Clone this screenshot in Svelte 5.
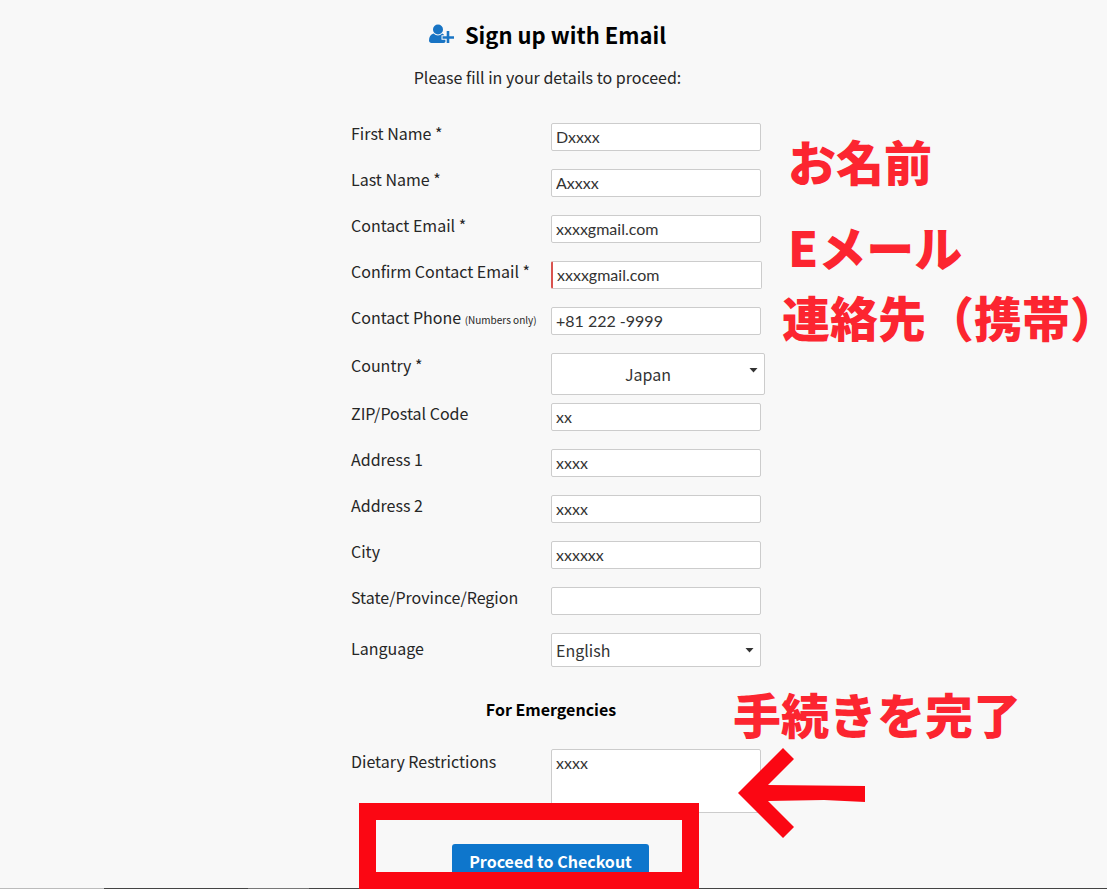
<script lang="ts">
  interface Field {
    id: string;
    label: string;
    value: string;
    type: string;
    hint?: string;
    invalid?: boolean;
  }

  let contactFields: Field[] = [
    { id: 'first-name', label: 'First Name *', value: 'Dxxxx', type: 'text' },
    { id: 'last-name', label: 'Last Name *', value: 'Axxxx', type: 'text' },
    { id: 'email', label: 'Contact Email *', value: 'xxxxgmail.com', type: 'text' },
    { id: 'confirm-email', label: 'Confirm Contact Email *', value: 'xxxxgmail.com', type: 'text', invalid: true },
    { id: 'phone', label: 'Contact Phone', value: '+81 222 -9999', type: 'tel', hint: '(Numbers only)' },
  ];

  let addressFields: Field[] = [
    { id: 'zip', label: 'ZIP/Postal Code', value: 'xx', type: 'text' },
    { id: 'address-1', label: 'Address 1', value: 'xxxx', type: 'text' },
    { id: 'address-2', label: 'Address 2', value: 'xxxx', type: 'text' },
    { id: 'city', label: 'City', value: 'xxxxxx', type: 'text' },
    { id: 'state', label: 'State/Province/Region', value: '', type: 'text' },
  ];

  let country = 'Japan';
  let language = 'English';
  let dietary = 'xxxx';

  const handleSubmit = (event: any) => {
    event.preventDefault();
  };
</script>

<style>
  :global(body) {
    background-color: #f8f8f8;
  }
  .page {
    display: flex;
    flex-direction: column;
    height: 100vh;
    overflow: hidden;
    color: #262626;
    font-family: "Noto Sans CJK JP", sans-serif;
    font-size: 16px;
  }
  .content {
    flex: 1;
    min-height: 0;
  }
  header {
    padding: 18px 12px 0 0;
    text-align: center;
  }
  h1 {
    display: flex;
    justify-content: center;
    align-items: center;
    gap: 11px;
    margin: 0;
    color: #000;
    font-size: 22px;
    font-weight: 700;
    line-height: 32px;
  }
  header p {
    margin: 15px 0 0;
    line-height: 24px;
  }
  .signup {
    padding: 34px 0 0 9px;
  }
  form {
    position: relative;
    width: 414px;
    margin: 0 auto;
  }
  .row {
    display: grid;
    grid-template-columns: 200px 1fr;
    align-items: start;
    margin-bottom: 18px;
  }
  .row.country {
    margin-bottom: 8px;
  }
  label {
    line-height: 20px;
    white-space: nowrap;
  }
  .country label,
  .dietary label {
    line-height: 24px;
  }
  .language label {
    line-height: 30px;
  }
  small {
    font-size: 10px;
  }
  input,
  select,
  textarea {
    display: block;
    box-sizing: border-box;
    width: 210px;
    margin: 0;
    border: 1px solid #ccc;
    border-radius: 2px;
    background-color: #fff;
    color: #333;
    outline: none;
  }
  input,
  textarea {
    padding: 0 4px 1px;
    font-family: Lato, sans-serif;
    font-size: 16px;
  }
  input {
    height: 28px;
  }
  input.invalid {
    width: 211px;
    border-left: 2px solid #d9534f;
  }
  textarea {
    height: 64px;
    padding-top: 3px;
    line-height: 20px;
    resize: none;
  }
  .select {
    position: relative;
    width: 210px;
  }
  select {
    width: 100%;
    height: 34px;
    padding: 0 24px 0 4px;
    appearance: none;
    font-family: inherit;
    font-size: 16px;
  }
  .select svg {
    position: absolute;
    top: 15px;
    right: 7px;
    pointer-events: none;
  }
  .country .select {
    width: 214px;
  }
  .country select {
    height: 42px;
    text-align: center;
    text-align-last: center;
  }
  h2 {
    margin: 30px 14px 28px 0;
    color: #000;
    font-size: 16px;
    font-weight: 700;
    line-height: 24px;
    text-align: center;
  }
  .actions {
    display: flex;
    justify-content: center;
    margin: 31px 15px 0 0;
  }
  .actions button {
    height: 34px;
    padding: 0 17px;
    border: 0;
    border-radius: 3px;
    background-color: #0e76cc;
    color: #fff;
    font-family: inherit;
    font-size: 16px;
    font-weight: 700;
    white-space: nowrap;
    cursor: pointer;
  }
  /* hand-placed notes on top of the form */
  .note {
    position: absolute;
    color: #fc2530;
    font-size: 48px;
    font-weight: 900;
    line-height: 48px;
    white-space: nowrap;
  }
  .note.name {
    top: 13px;
    left: 437px;
  }
  .note.email {
    top: 99px;
    left: 437px;
  }
  .note.phone {
    top: 169px;
    left: 431px;
  }
  .note.finish {
    top: 566px;
    left: 382px;
  }
  /* half-width closing bracket */
  .close {
    font-feature-settings: "halt";
  }
  .arrow {
    position: absolute;
    top: 624px;
    left: 387px;
  }
  .frame {
    position: absolute;
    top: 680px;
    left: 8px;
    box-sizing: border-box;
    width: 340px;
    height: 86px;
    border: 17px solid #fb0713;
    pointer-events: none;
  }
  footer {
    flex: none;
    height: 1px;
    background: linear-gradient(to right, #bbb 104px, #444 104px, #444 248px, #777 248px, #777 309px, #444 309px);
  }
</style>

{#snippet caret()}
  <svg width="9" height="5" viewBox="0 0 9 5" aria-hidden="true">
    <path d="M0.500 0h8L4.500 4.500z" fill="#333" />
  </svg>
{/snippet}

{#snippet textRow(field: Field)}
  <div class="row">
    <label for={field.id}>{field.label} {#if field.hint}<small>{field.hint}</small>{/if}</label>
    <input id={field.id} type={field.type} class={field.invalid ? 'invalid' : ''} bind:value={field.value} />
  </div>
{/snippet}

<div class="page">
  <main class="content">
    <header>
      <h1>
        <svg width="25" height="20" viewBox="0 0 25 20" fill="#1874c4" aria-hidden="true">
          <circle cx="9" cy="5.500" r="5" />
          <path d="M4.500 9.500C1.500 10.500 0 13 0 16.500 0 18 1 19 2.500 19H14.500C15.300 19 16 18.600 16.400 18V15.800H12.500V11.200H15.300C14.800 10.600 14.200 9.900 13.200 9.500 10.500 12 7.500 12 4.500 9.500Z" />
          <path d="M17.700 7h2.600v5.200H25v2.600h-4.700V19h-2.600v-4.200h-4.200v-2.600h4.200z" />
        </svg>
        Sign up with Email
      </h1>
      <p>Please fill in your details to proceed:</p>
    </header>

    <div class="signup">
      <form onsubmit={handleSubmit}>
        {#each contactFields as field}
          {@render textRow(field)}
        {/each}

        <div class="row country">
          <label for="country">Country *</label>
          <div class="select">
            <select id="country" bind:value={country}>
              <option>Japan</option>
            </select>
            {@render caret()}
          </div>
        </div>

        {#each addressFields as field}
          {@render textRow(field)}
        {/each}

        <div class="row language">
          <label for="language">Language</label>
          <div class="select">
            <select id="language" bind:value={language}>
              <option>English</option>
            </select>
            {@render caret()}
          </div>
        </div>

        <h2>For Emergencies</h2>

        <div class="row dietary">
          <label for="dietary">Dietary Restrictions</label>
          <textarea id="dietary" bind:value={dietary}></textarea>
        </div>

        <div class="actions">
          <button type="submit">Proceed to Checkout</button>
        </div>

        <span class="note name" lang="ja">お名前</span>
        <span class="note email" lang="ja">Eメール</span>
        <span class="note phone" lang="ja">連絡先（携帯<span class="close">）</span></span>
        <span class="note finish" lang="ja">手続きを完了</span>
        <svg class="arrow" width="128" height="92" viewBox="0 0 128 92" aria-hidden="true">
          <path d="M0 46L45 1L56 12L30 38L127 39V55L86 53L30 54L56 80L45 91Z" fill="#fb0713" />
        </svg>
        <div class="frame"></div>
      </form>
    </div>
  </main>
  <footer></footer>
</div>
